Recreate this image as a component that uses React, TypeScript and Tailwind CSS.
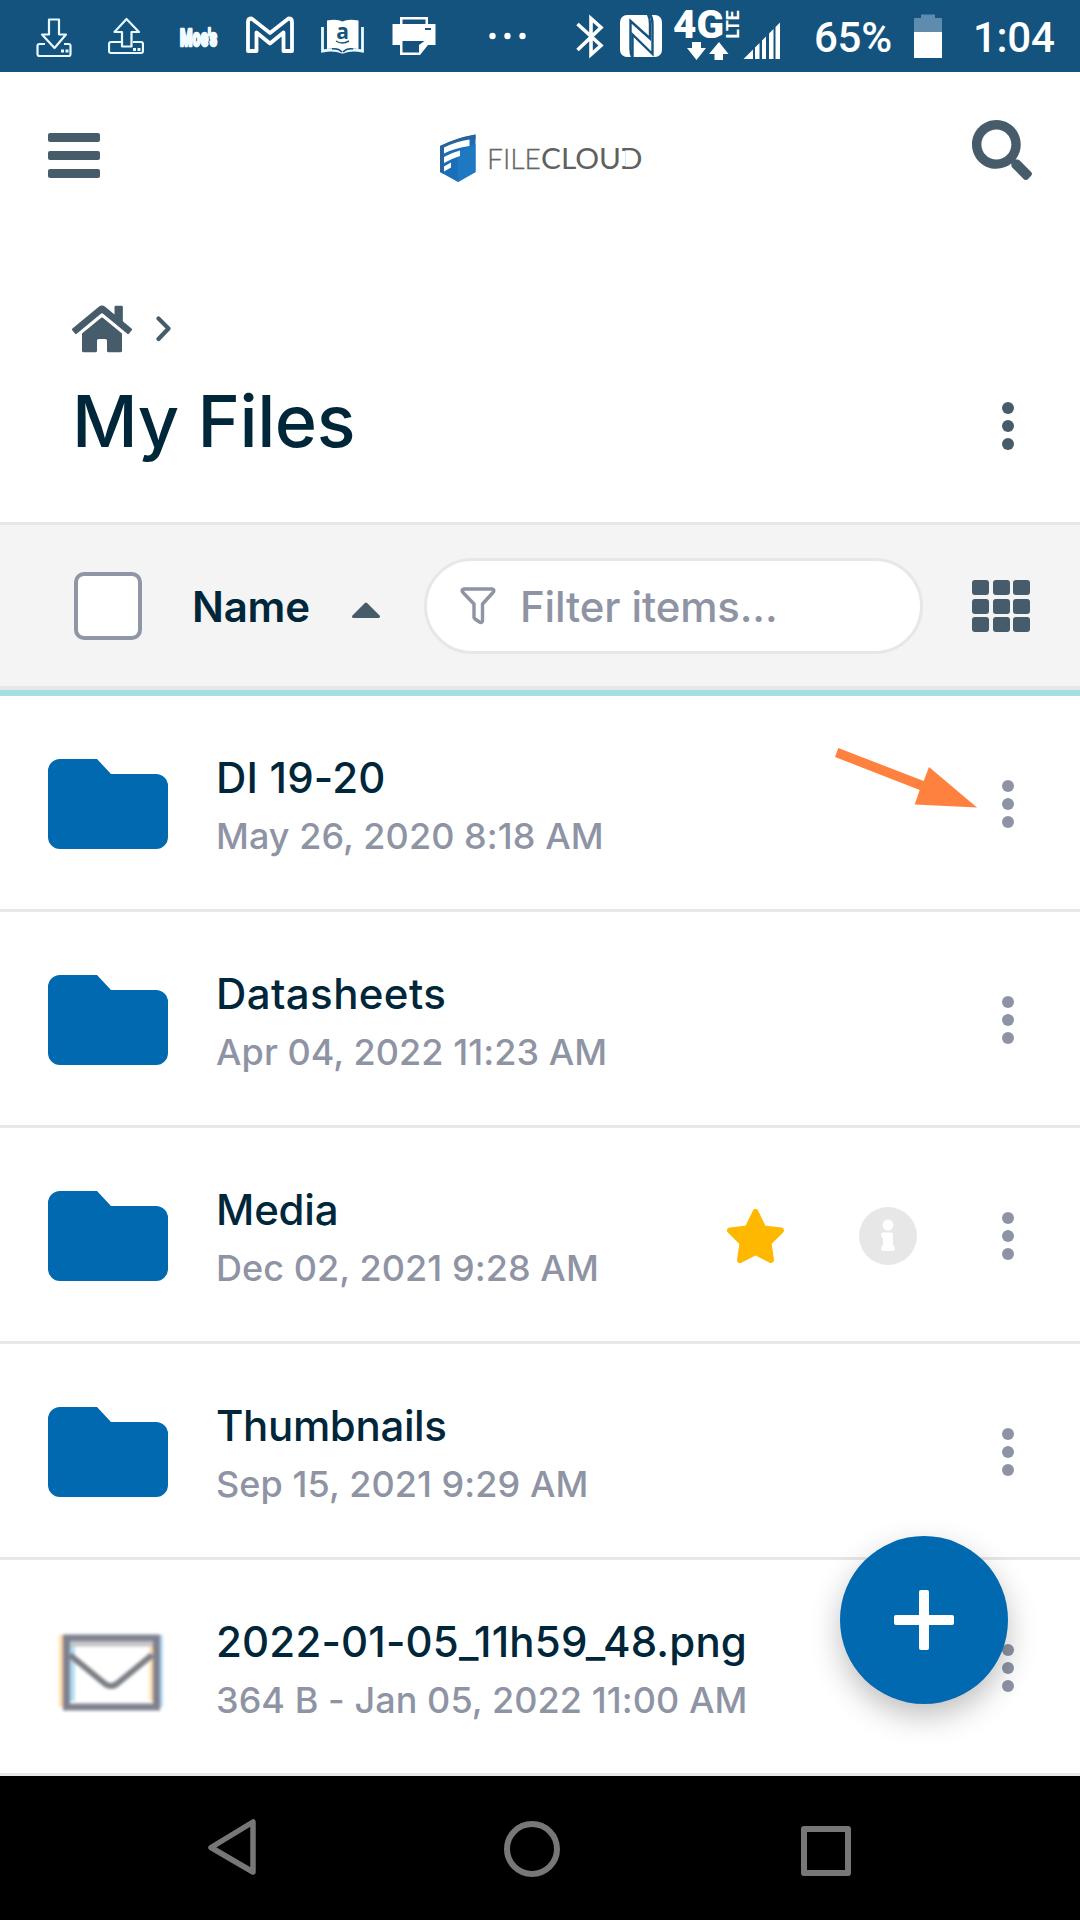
import { FaHome, FaSearch } from 'react-icons/fa';

const files = [
  { name: 'DI 19-20', meta: 'May 26, 2020 8:18 AM', type: 'folder', starred: false, highlighted: true, tracking: 'tracking-[0.2px]' },
  { name: 'Datasheets', meta: 'Apr 04, 2022 11:23 AM', type: 'folder', starred: false, highlighted: false, tracking: 'tracking-[0.4px]' },
  { name: 'Media', meta: 'Dec 02, 2021 9:28 AM', type: 'folder', starred: true, highlighted: false, tracking: 'tracking-[-0.2px]' },
  { name: 'Thumbnails', meta: 'Sep 15, 2021 9:29 AM', type: 'folder', starred: false, highlighted: false, tracking: 'tracking-[-0.35px]' },
  { name: '2022-01-05_11h59_48.png', meta: '364 B - Jan 05, 2022 11:00 AM', type: 'file', starred: false, highlighted: false, tracking: 'tracking-[0.18px]' },
];

function StatusBar() {
  return (
    <div className="flex h-[72px] shrink-0 items-start bg-[#14537e] pl-9 text-white">
      {/* Download */}
      <svg className="h-[72px] w-9" viewBox="36 0 36 72" fill="none" stroke="#e8faff" strokeWidth="2.2" strokeLinejoin="round">
        <path d="M49 19.5h10v15h7L54.500 48 42 34.500h7z" />
        <path d="M45 44h-5.500a2 2 0 0 0-2 2v8a2 2 0 0 0 2 2h29a2 2 0 0 0 2-2v-8a2 2 0 0 0-2-2H64" />
        <path d="M61 51h3M65.500 51h3" strokeWidth="3" />
      </svg>
      {/* Upload */}
      <svg className="ml-9 h-[72px] w-9" viewBox="108 0 36 72" fill="none" stroke="#e8faff" strokeWidth="2.2" strokeLinejoin="round">
        <path d="M122 46.500V32h-7.500L126.500 19 139 32h-7.500v14.500z" />
        <path d="M121 42h-10a2 2 0 0 0-2 2v7a2 2 0 0 0 2 2h30a2 2 0 0 0 2-2v-7a2 2 0 0 0-2-2h-8" />
        <path d="M133 49.500h3M137.500 49.500h3" strokeWidth="3" />
      </svg>
      {/* Moe's */}
      <svg className="ml-[30px] h-[72px] w-12 overflow-visible" viewBox="174 0 48 72" fill="#f2fbff">
        <text x="180" y="45.500" fontFamily="Roboto, sans-serif" fontWeight="900" fontSize="24" textLength="37" lengthAdjust="spacingAndGlyphs" stroke="#f2fbff" strokeWidth="2.600" strokeLinejoin="round">
          Moe's
        </text>
      </svg>
      {/* Gmail */}
      <svg className="ml-6 h-[72px] w-12" viewBox="246 0 48 72" fill="none" stroke="#fff" strokeWidth="3.8" strokeLinejoin="round">
        <path d="M248 51V22q0-3.500 3.500-3.500L270 33l18.500-14.500q3.500 0 3.500 3.500v29h-8.500V32.500L270 43.500 256.500 32.500V51z" />
      </svg>
      {/* Kindle */}
      <svg className="ml-[27px] h-[72px] w-[43px]" viewBox="321 0 43 72">
        <path d="M322.500 27v24q12-2 19 1h2q7-3 19-1V27" fill="none" stroke="#e8faff" strokeWidth="2.800" />
        <path d="M327 20.500q10-2 15.500 1Q348 18.500 358.500 20.500V49q-10-2-16 3-6-5-15.500-3z" fill="#fff" />
        <path d="M342 52q-4-4-10-3M343 52q4-4 10-3" fill="none" stroke="#14537e" strokeWidth="1.500" />
        <text x="342.500" y="39" textAnchor="middle" fontFamily="'Open Sans', sans-serif" fontWeight="700" fontSize="21" fill="#14537e">
          a
        </text>
        <path d="M336 41q6 4 13 0" fill="none" stroke="#14537e" strokeWidth="1.500" />
      </svg>
      {/* Printer */}
      <svg className="ml-7 h-[72px] w-11" viewBox="392 0 44 72" fill="#fff">
        <path d="M400 17h28v7h7.500v21h-7.500l-8 10h-20V45h-7.500V24H400z" />
        <path d="M402.500 19.500h23V24h-23zM425 28h6v2h-6zM402.500 41h22l-5.500 4v7.500h-16.500z" fill="#14537e" />
      </svg>
      {/* More notifications */}
      <svg className="ml-[52px] h-[72px] w-10" viewBox="488 0 40 72" fill="#fff">
        <circle cx="492.500" cy="36" r="3.200" />
        <circle cx="507.500" cy="36" r="3.200" />
        <circle cx="522.500" cy="36" r="3.200" />
      </svg>
      {/* Bluetooth */}
      <svg className="ml-12 h-[72px] w-7" viewBox="576 0 28 72" fill="none" stroke="#fff" strokeWidth="3.600">
        <path d="M577.500 24 601 45.500 591 54.500V18.500l10 9L577.500 50" />
      </svg>
      {/* NFC */}
      <svg className="ml-4 h-[72px] w-[42px]" viewBox="620 0 42 72">
        <rect x="620" y="15" width="42" height="42" rx="7" fill="#fff" />
        <path d="M632.500 58q-2-3.500-2-9V21l19.500 17.500V24q0-6-2-9.500" fill="none" stroke="#14537e" strokeWidth="2.400" />
        <path d="M632.500 58V34.500L652.500 54V24q0-6-2.500-9.500" fill="none" stroke="#14537e" strokeWidth="2.400" />
      </svg>
      {/* 4G LTE with data arrows */}
      <svg className="ml-3 h-[72px] w-[66px] overflow-visible" viewBox="674 0 66 72" fill="#fff">
        <text x="673" y="37.500" fontFamily="Roboto, sans-serif" fontWeight="900" fontSize="38" textLength="51" lengthAdjust="spacingAndGlyphs">
          4G
        </text>
        <text transform="translate(738.500 38.500) rotate(-90)" fontFamily="Roboto, sans-serif" fontWeight="700" fontSize="18" textLength="28" lengthAdjust="spacingAndGlyphs">
          LTE
        </text>
        <path d="M692 42h9v6h5l-9.500 12-9.500-12h5zM714.500 60h8.500v-6h5.500L719 42l-10 12h5.500z" />
      </svg>
      {/* Signal */}
      <svg className="ml-[3px] h-[72px] w-[37px]" viewBox="743 0 37 72" fill="#fff">
        <path d="M743.500 59 753 49.500V59zM755 47.500l4.500-4.500v16H755zM762 40.500l4-4V59h-4zM769 33.500l4.500-4.500v30H769zM775.500 27l4.500-4.500V59h-4.500z" />
      </svg>
      <span className="ml-[34px] w-[100px] whitespace-nowrap font-[Roboto,sans-serif] text-[42px] leading-[76px] font-medium tracking-[-0.3px]">65%</span>
      {/* Battery */}
      <svg className="h-[72px] w-7" viewBox="914 0 28 72">
        <path d="M914 18h7v-3.500h14V18h7v14h-28z" fill="#5f8cac" />
        <path d="M914 32h28v26h-28z" fill="#fff" />
      </svg>
      <span className="ml-[31px] whitespace-nowrap font-[Roboto,sans-serif] text-[42px] leading-[76px] font-medium tracking-[-0.3px]">1:04</span>
    </div>
  );
}

function Logo() {
  return (
    <svg className="h-12 w-[204px]" viewBox="438 134 204 48">
      <path d="M440 146q16-8 35.500-11.500V172L458 182l-18-10z" fill="#1a6fb8" />
      <path d="M458 182V152l17.500-8V172z" fill="#1e78c2" />
      <path d="M440 146q16-8 35.500-11.500V139q-20 3-32 9v26l-3.500-2z" fill="#2a639b" />
      <path d="M444 147.500q12-6 25.500-8v6.500q-15 2-25.500 7.500zM444 157q8-4.500 16-6.500v5.500q-8 2.500-16 7zM444 166.500l7-4v5l-7 4z" fill="#fff" />
      <text x="487" y="168.500" fontFamily="Lato, sans-serif" fontSize="28" fontWeight="300" fill="#666" stroke="#666" strokeWidth="0.300" textLength="54" lengthAdjust="spacingAndGlyphs">
        FILE
      </text>
      <text y="168.500" fontFamily="Lato, sans-serif" fontSize="28" fontWeight="400" fill="#606060">
        <tspan x="541" textLength="80" lengthAdjust="spacingAndGlyphs">CLOU</tspan>
        <tspan x="619.500" textLength="23" lengthAdjust="spacingAndGlyphs">D</tspan>
      </text>
      {/* The D is open on its left side */}
      <path d="M621 151h4.500v15h-4.500z" fill="#fff" />
    </svg>
  );
}

function Kebab({ color }: { color: string }) {
  return (
    <svg className="h-12 w-3 shrink-0" viewBox="0 0 12 48" fill={color}>
      <circle cx="6" cy="6" r="6" />
      <circle cx="6" cy="24" r="6" />
      <circle cx="6" cy="42" r="6" />
    </svg>
  );
}

function FolderIcon() {
  return (
    <svg className="h-[90px] w-[120px]" viewBox="0 0 120 90" fill="#0069af">
      <path d="M12 0h37l14 15h45a12 12 0 0 1 12 12v51a12 12 0 0 1-12 12H12A12 12 0 0 1 0 78V12A12 12 0 0 1 12 0z" />
    </svg>
  );
}

function MailIcon() {
  return (
    <svg className="h-[90px] w-[120px]" viewBox="48 1624 120 90" fill="none">
      <g className="blur-[1.800px]">
        <path d="M61.500 1636v72M152 1644v58" stroke="#ffdca8" strokeWidth="5" />
        <path d="M72.500 1644v58M160.500 1636v72" stroke="#b4dcf5" strokeWidth="5" />
        <path d="M66.500 1639h90v69h-90z" stroke="#7f818f" strokeWidth="7" />
        <path d="M70 1645h83" stroke="#c4c4c6" strokeWidth="5" />
        <path d="M70 1656l34 28q7 6 14 0l34-28" stroke="#7b7f85" strokeWidth="6" />
      </g>
    </svg>
  );
}

export default function App() {
  return (
    <div className="relative flex h-[1920px] w-[1080px] flex-col overflow-hidden bg-white font-[Inter,sans-serif]">
      <StatusBar />

      {/* Header */}
      <header className="flex h-[168px] shrink-0 items-start justify-between pr-12 pl-12">
        <div className="mt-[61px] flex w-[60px] flex-col gap-[9.500px]">
          <div className="h-[8.500px] w-[52px] rounded-[2px] bg-[#475c6b]" />
          <div className="h-[8.500px] w-[52px] rounded-[2px] bg-[#475c6b]" />
          <div className="h-[8.500px] w-[52px] rounded-[2px] bg-[#475c6b]" />
        </div>
        <div className="mt-[62px]">
          <Logo />
        </div>
        <FaSearch className="mt-12 size-[60px] text-[#475c6b]" />
      </header>

      {/* Breadcrumb and title */}
      <section className="h-[282px] shrink-0 pt-[62px] pr-[66px] pl-[72px]">
        <div className="flex items-center gap-6">
          <FaHome className="h-[54px] w-[60px] text-[#475c6b]" />
          <svg className="h-[26px] w-4" viewBox="0 0 16 26" fill="none" stroke="#475c6b" strokeWidth="4.200" strokeLinecap="round" strokeLinejoin="round">
            <path d="M2.500 2.500 12.500 12.500 2.500 23" />
          </svg>
        </div>
        <div className="mt-5 flex items-center justify-between">
          <h1 className="text-[72px] leading-[90px] font-medium tracking-[-0.450px] text-[#00263a]">My Files</h1>
          <div className="pt-[10px]">
            <Kebab color="#475c6b" />
          </div>
        </div>
      </section>

      {/* List toolbar */}
      <div className="flex h-[174px] shrink-0 items-center border-t-[3px] border-b-[6px] border-t-[#e7e7e7] border-b-[#a2dfe1] bg-[#f4f4f4] pb-[3px] pl-[74px] shadow-[inset_0_-4px_0_#e7e7e7]">
        <div className="size-[68px] rounded-[10px] border-4 border-[#8f96a5] bg-white" />
        <span className="ml-[50px] w-[120px] pt-[2px] text-[42px] leading-[50px] font-semibold tracking-[-0.200px] text-[#00263a]">Name</span>
        <svg className="mt-[8px] ml-[40px] h-4 w-7" viewBox="0 0 28 16" fill="#475c6b" stroke="#475c6b" strokeWidth="3" strokeLinejoin="round">
          <path d="M14 2 26.500 14.500h-25z" />
        </svg>
        <div className="ml-11 flex h-24 w-[499px] items-center rounded-full border-[3px] border-[#e7e7e7] bg-white pl-[33px]">
          <svg className="h-[38px] w-9" viewBox="0 0 36 38" fill="none" stroke="#8f94a5" strokeWidth="3.400" strokeLinejoin="round">
            <path d="M3.500 2h29q2.500 1 .5 3.500L22.500 17v17q-.5 2.500-3 1l-4.500-3-1-1.500V17L3 5.500Q1 3 3.500 2z" />
          </svg>
          <span className="ml-6 pt-[2px] text-[42px] leading-[50px] font-medium tracking-[-0.150px] text-[#8f94a5]">Filter items...</span>
        </div>
        <div className="ml-[49px] grid w-[58px] grid-cols-3 gap-[3.500px]">
          {Array.from({ length: 9 }, (_, i) => (
            <div key={i} className="h-[15px] rounded-[3px] bg-[#475c6b]" />
          ))}
        </div>
      </div>

      {/* Files */}
      <ul className="shrink-0">
        {files.map((file) => (
          <li key={file.name} className="relative flex h-[216px] items-center border-b-[3px] border-[#e7e7e7] pt-[3px] pr-[66px] pl-12">
            {file.type === 'folder' ? <FolderIcon /> : <MailIcon />}
            <div className="ml-12 flex-1 pt-[6px] whitespace-nowrap">
              <p className={`text-[42px] leading-[58px] font-medium text-[#00263a] ${file.tracking}`}>{file.name}</p>
              <p className="text-[36px] leading-[58px] font-medium tracking-[0.060px] text-[#8f94a5]">{file.meta}</p>
            </div>
            {file.starred && (
              <div className="mr-[85px] flex items-center gap-[75px]">
                <svg className="h-[54px] w-[57px]" viewBox="0 0 57 54" fill="#ffb800" stroke="#ffb800" strokeWidth="6" strokeLinejoin="round">
                  <path d="m28.500 3 8 16.500L54 21.500 41.500 34l2.500 17-15.500-8L13 51l2.500-17L3 21.500l17.500-2z" />
                </svg>
                <svg className="size-[58px]" viewBox="0 0 58 58">
                  <circle cx="29" cy="29" r="29" fill="#e7e7e7" />
                  <circle cx="29" cy="18" r="5.500" fill="#fff" />
                  <path d="M24 25.500h8a2 2 0 0 1 2 2V38q2 1 2 3.500t-2.500 2.500h-9q-2.500 0-2.500-2.500T24 38v-7q-2-1-2-3.500t2-2z" fill="#fff" />
                </svg>
              </div>
            )}
            <Kebab color="#8f94a5" />
            {file.highlighted && (
              <svg className="absolute top-[50px] left-[830px] h-[70px] w-[150px]" viewBox="830 746 150 70" fill="#ff8140">
                <path d="m838.300 748 85.400 33 5.300-14 48 40.500-62.300-3 5-14.500-84.700-33z" />
              </svg>
            )}
          </li>
        ))}
      </ul>

      {/* Add button */}
      <button className="absolute top-[1536px] left-[840px] flex size-[168px] items-center justify-center rounded-full bg-[#0069af] shadow-[0_12px_30px_rgba(0,0,0,0.25)]">
        <svg className="size-[60px]" viewBox="0 0 60 60" fill="#fff">
          <rect x="25" width="10" height="60" rx="2" />
          <rect y="25" width="60" height="10" rx="2" />
        </svg>
      </button>

      {/* Android navigation */}
      <nav className="flex h-36 shrink-0 items-center bg-black pl-[206px]">
        <svg className="h-[60px] w-[52px]" viewBox="206 1818 52 60" fill="none" stroke="#777" strokeWidth="5.500" strokeLinejoin="round">
          <path d="M253 1822v50L211 1847.500z" />
        </svg>
        <svg className="ml-[244px] h-[60px] w-[60px]" viewBox="502 1818 60 60" fill="none" stroke="#777" strokeWidth="6">
          <circle cx="532" cy="1849" r="25" />
        </svg>
        <svg className="ml-[238px] h-[60px] w-[52px]" viewBox="800 1818 52 60" fill="none" stroke="#777" strokeWidth="6" strokeLinejoin="round">
          <rect x="804" y="1829" width="44" height="44" />
        </svg>
      </nav>
    </div>
  );
}
